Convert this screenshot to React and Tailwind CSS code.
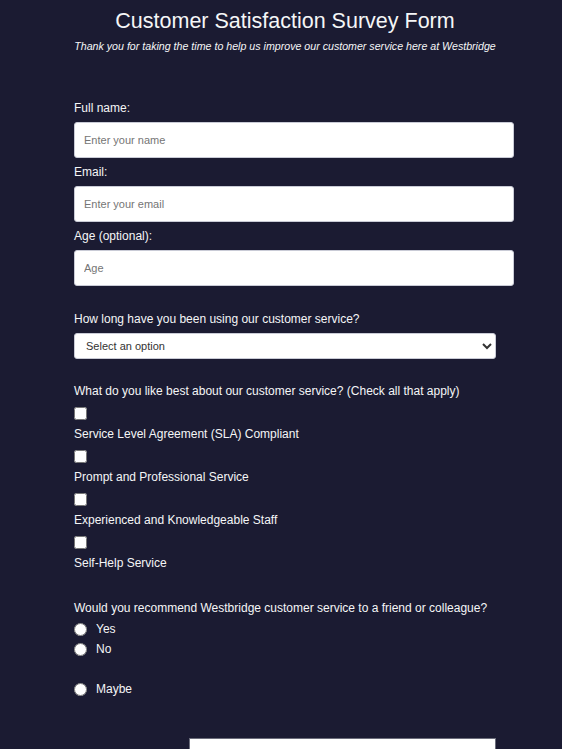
import React from 'react';

const options = [
  'Service Level Agreement (SLA) Compliant',
  'Prompt and Professional Service',
  'Experienced and Knowledgeable Staff',
  'Self-Help Service',
];

function TextField({ label, placeholder, type = 'text' }) {
  return (
    <div className="flex flex-col">
      <label className="block text-[12px] leading-[18px] mb-[5px]">{label}</label>
      <input
        type={type}
        placeholder={placeholder}
        className="w-[440px] h-[36px] bg-white rounded-[3px] border border-[#c9cbd6] px-[9px] text-[11px] text-[#333] placeholder:text-[#757575] mb-[5px]"
      />
    </div>
  );
}

export default function App() {
  return (
    <div
      className="h-[749px] bg-[#1b1b32] text-[#f5f6f7] overflow-hidden"
      style={{ fontFamily: '"Liberation Sans", Arial, sans-serif' }}
    >
      <div className="ml-[74px] w-[422px]">
        <h1 className="pt-[9px] text-center text-[21.5px] leading-[25px] whitespace-nowrap">
          Customer Satisfaction Survey Form
        </h1>
        <p className="mt-[5px] text-center italic text-[10.65px] leading-[14px] whitespace-nowrap">
          Thank you for taking the time to help us improve our customer service here at Westbridge
        </p>

        <form className="mt-[46px]">
          <TextField label="Full name:" placeholder="Enter your name" />
          <TextField label="Email:" placeholder="Enter your email" type="email" />
          <TextField label="Age (optional):" placeholder="Age" type="number" />

          <div className="mt-[19px]">
            <label className="block text-[12px] leading-[18px] mb-[5px]">
              How long have you been using our customer service?
            </label>
            <select className="w-full h-[26px] bg-white rounded-[3px] border border-[#c9cbd6] pl-[7px] pr-[6px] text-[11px] text-[#333]">
              <option>Select an option</option>
              <option>Less than 6 months</option>
              <option>6 months to 1 year</option>
              <option>More than 1 year</option>
            </select>
          </div>

          <div className="mt-[23px]">
            <p className="text-[12px] leading-[18px] whitespace-nowrap">
              What do you like best about our customer service? (Check all that apply)
            </p>
            <div className="mt-[7px] flex flex-col">
              {options.map((opt) => (
                <div key={opt} className="flex flex-col mb-[7px]">
                  <input type="checkbox" className="w-[13px] h-[13px] m-0" />
                  <label className="mt-[5px] text-[12px] leading-[18px]">{opt}</label>
                </div>
              ))}
            </div>
          </div>

          <div className="mt-[20px]">
            <p className="text-[12px] leading-[18px] whitespace-nowrap">
              Would you recommend Westbridge customer service to a friend or colleague?
            </p>
            <div className="mt-[2px] flex flex-col">
              <label className="flex items-center h-[20px] text-[12px]">
                <input type="radio" name="rec" className="w-[13px] h-[13px] m-0 mr-[9px]" />
                Yes
              </label>
              <label className="flex items-center h-[20px] text-[12px]">
                <input type="radio" name="rec" className="w-[13px] h-[13px] m-0 mr-[9px]" />
                No
              </label>
              <div className="h-[20px]" />
              <label className="flex items-center h-[20px] text-[12px]">
                <input type="radio" name="rec" className="w-[13px] h-[13px] m-0 mr-[9px]" />
                Maybe
              </label>
            </div>
          </div>

          <div className="mt-[39px]">
            <textarea className="block ml-[115px] w-[307px] h-[80px] bg-white border border-[#6b6d7b]" />
          </div>
        </form>
      </div>
    </div>
  );
}
